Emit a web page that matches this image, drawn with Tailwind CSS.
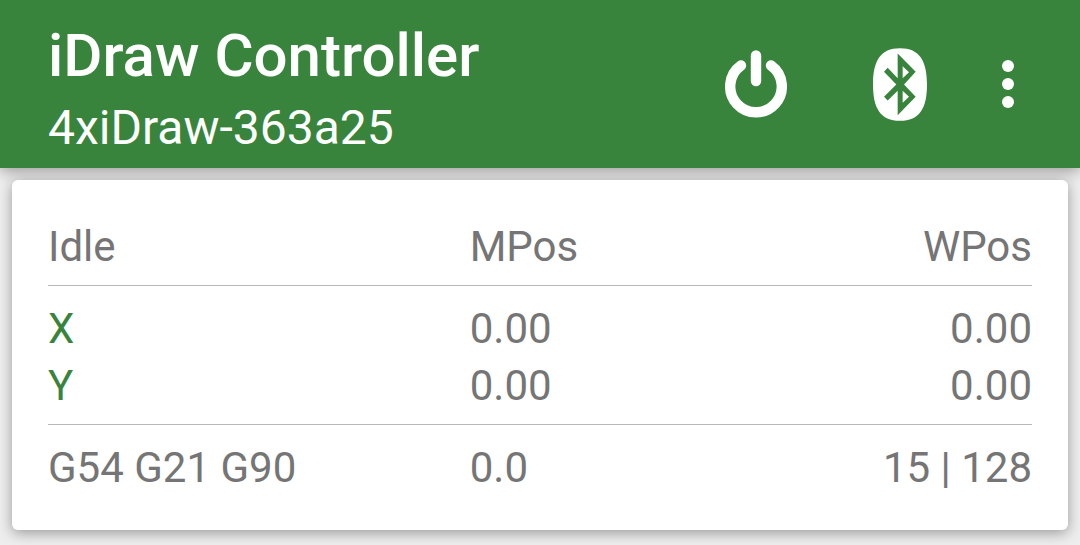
<!DOCTYPE html>
<html lang="en">
<head>
<meta charset="utf-8">
<meta name="viewport" content="width=device-width, initial-scale=1">
<title>iDraw Controller</title>
<script src="https://cdn.jsdelivr.net/npm/@tailwindcss/browser@4"></script>
</head>
<body class="min-h-screen bg-[#eeeeee] font-[Roboto,sans-serif] text-[#757575]">
<header class="flex h-[168px] items-center justify-between bg-[#39843c] pl-12 pr-9 text-white shadow-[0_3px_14px_rgba(0,0,0,0.36)]">
  <div class="flex flex-col gap-2 pt-2">
    <h1 class="text-[60px]/[72px] font-medium">iDraw Controller</h1>
    <p class="text-5xl/[56px]">4xiDraw-363a25</p>
  </div>
  <div class="flex items-center">
    <button type="button" aria-label="Power" class="flex size-36 items-center justify-center">
      <svg class="h-[72px] w-16" viewBox="0 0 64 72" fill="none" stroke="currentColor" stroke-width="10.4" stroke-linecap="round" aria-hidden="true">
        <path d="M32 7.5V33M17 17.5a25.8 25.8 0 1 0 30 0"/>
      </svg>
    </button>
    <button type="button" aria-label="Bluetooth" class="flex size-36 items-center justify-center">
      <svg class="h-[73px] w-[54px]" viewBox="0 0 162 218" fill="currentColor" fill-rule="evenodd" aria-hidden="true">
        <path d="M81 0C140 0 162 38 162 109S140 218 81 218 0 180 0 109 22 0 81 0ZM74 16V90L44 59 33 71 70 109 33 146 44 157 74 128V201L128 146 93 109 128 71ZM89 54 108 72 89 90ZM89 128 108 146 89 164Z"/>
      </svg>
    </button>
    <button type="button" aria-label="More options" class="flex h-36 w-18 items-center justify-center">
      <svg class="h-12 w-3" viewBox="0 0 12 48" fill="currentColor" aria-hidden="true">
        <circle cx="6" cy="6" r="6"/><circle cx="6" cy="24" r="6"/><circle cx="6" cy="42" r="6"/>
      </svg>
    </button>
  </div>
</header>
<main class="p-3">
  <section class="rounded-md bg-white px-9 pt-[38px] pb-[34px] shadow-[0_3px_14px_rgba(0,0,0,0.36)]">
    <table class="w-full table-fixed border-separate border-spacing-0 text-left text-[42px]/[57px]">
      <thead>
        <tr>
          <th scope="col" class="w-3/7 border-b border-[#b8b8b8] p-0 pb-[10px] font-normal">Idle</th>
          <th scope="col" class="w-2/7 border-b border-[#b8b8b8] p-0 pb-[10px] font-normal">MPos</th>
          <th scope="col" class="w-2/7 border-b border-[#b8b8b8] p-0 pb-[10px] text-right font-normal">WPos</th>
        </tr>
      </thead>
      <tbody>
        <tr>
          <th scope="row" class="p-0 pt-[14px] font-normal text-[#39843c]">X</th>
          <td class="p-0 pt-[14px]">0.00</td>
          <td class="p-0 pt-[14px] text-right">0.00</td>
        </tr>
        <tr>
          <th scope="row" class="border-b border-[#b8b8b8] p-0 pb-[10px] font-normal text-[#39843c]">Y</th>
          <td class="border-b border-[#b8b8b8] p-0 pb-[10px]">0.00</td>
          <td class="border-b border-[#b8b8b8] p-0 pb-[10px] text-right">0.00</td>
        </tr>
      </tbody>
      <tfoot>
        <tr>
          <td class="p-0 pt-[14px]">G54 G21 G90</td>
          <td class="p-0 pt-[14px]">0.0</td>
          <td class="p-0 pt-[14px] text-right">15 | 128</td>
        </tr>
      </tfoot>
    </table>
  </section>
</main>
</body>
</html>
